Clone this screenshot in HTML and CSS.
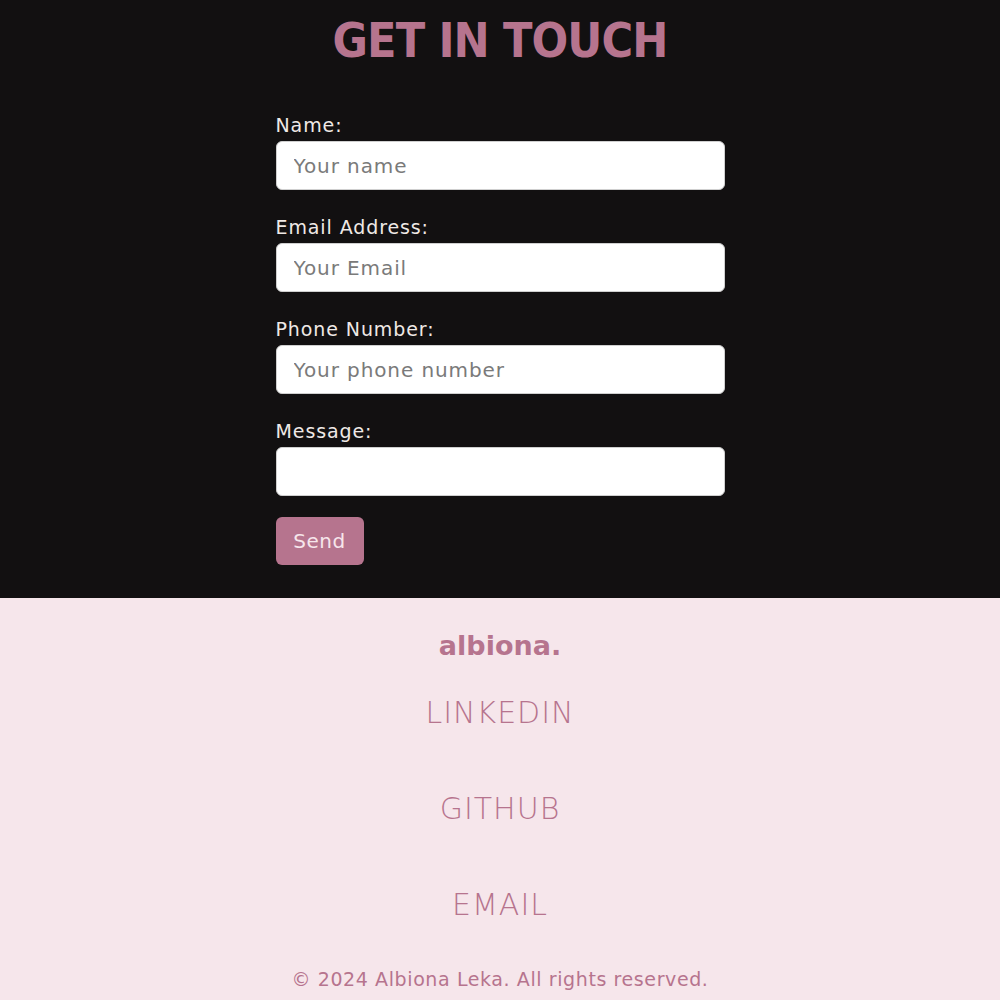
FILE: index.html
```
<!DOCTYPE html>
<html lang="en">
<head>
<meta charset="utf-8">
<title>Get in touch</title>
<link rel="stylesheet" href="styles.css">
</head>
<body>
<section class="contact">
  <h1 class="title">GET IN TOUCH</h1>
  <form class="form">
    <label class="label" for="name">Name:</label>
    <input class="field" id="name" type="text" placeholder="Your name">
    <label class="label" for="email">Email Address:</label>
    <input class="field" id="email" type="email" placeholder="Your Email">
    <label class="label" for="phone">Phone Number:</label>
    <input class="field" id="phone" type="tel" placeholder="Your phone number">
    <label class="label" for="msg">Message:</label>
    <textarea class="field area" id="msg"></textarea>
    <button class="send" type="button">Send</button>
  </form>
</section>
<footer class="footer">
  <div class="brand">albiona.</div>
  <nav class="links">
    <a class="link" href="#">LINKEDIN</a>
    <a class="link" href="#">GITHUB</a>
    <a class="link" href="#">EMAIL</a>
  </nav>
  <p class="copy">© 2024 Albiona Leka. All rights reserved.</p>
</footer>
</body>
</html>
```
FILE: styles.css
```
* { box-sizing: border-box; }
html, body { margin: 0; padding: 0; }
body {
  font-family: "DejaVu Sans", "Open Sans", sans-serif;
  background: #f6e6eb;
}
.contact {
  background: #121011;
  height: 598px;
  padding-top: 14px;
  display: flex;
  flex-direction: column;
  align-items: center;
}
.title {
  margin: 0;
  color: #b6748e;
  font-family: "DejaVu Sans Condensed", "DejaVu Sans", sans-serif;
  font-size: 48px;
  font-weight: 700;
  line-height: 52px;
  letter-spacing: -0.9px;
}
.form {
  width: 449px;
  margin-top: 48px;
  display: flex;
  flex-direction: column;
}
.label {
  color: #efe9e6;
  font-size: 19px;
  line-height: 22px;
  letter-spacing: 0.9px;
  margin-bottom: 5px;
}
.field {
  height: 49px;
  border: 1px solid #cfcfcf;
  border-radius: 6px;
  background: #fff;
  padding: 0 17px;
  font-family: inherit;
  font-size: 20px;
  letter-spacing: 0.9px;
  color: #333;
  margin-bottom: 26px;
}
.field::placeholder { color: #7a7a7a; }
.area { resize: none; margin-bottom: 21px; }
.send {
  align-self: flex-start;
  width: 88px;
  height: 48px;
  border: none;
  border-radius: 6px;
  background: #b6748e;
  color: #f6e6eb;
  font-family: inherit;
  font-size: 20px;
  letter-spacing: 0.5px;
}
.footer {
  display: flex;
  flex-direction: column;
  align-items: center;
  padding-top: 28px;
  color: #b6748e;
}
.brand {
  font-size: 27px;
  font-weight: 700;
  line-height: 40px;
}
.links {
  display: flex;
  flex-direction: column;
  align-items: center;
  margin-top: 29px;
  gap: 60px;
}
.link {
  color: #b6748e;
  text-decoration: none;
  font-size: 30px;
  font-weight: 300;
  line-height: 36px;
  letter-spacing: 1px;
}
.copy {
  margin: 44px 0 0;
  font-size: 19px;
  line-height: 24px;
  letter-spacing: 0.6px;
}
```
